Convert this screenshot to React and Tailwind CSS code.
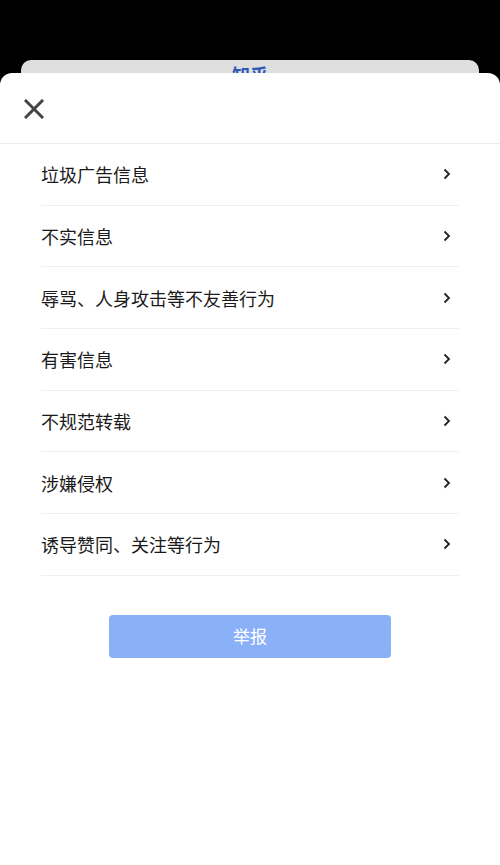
const reasons = [
  '垃圾广告信息',
  '不实信息',
  '辱骂、人身攻击等不友善行为',
  '有害信息',
  '不规范转载',
  '涉嫌侵权',
  '诱导赞同、关注等行为',
]

const CloseIcon = () => (
  <svg width="20" height="20" viewBox="0 0 20 20" fill="none">
    <path d="M2 2L18 18M18 2L2 18" stroke="#444" strokeWidth="3" strokeLinecap="square" />
  </svg>
)

const Chevron = () => (
  <svg width="8" height="12" viewBox="0 0 8 12" fill="none">
    <path d="M1.5 1.5L6 6L1.5 10.5" stroke="#222" strokeWidth="1.8" />
  </svg>
)

export default function App() {
  return (
    <div
      className="min-h-[865px] bg-black pt-[60px] flex flex-col"
      style={{ fontFamily: '"PingFang SC", "Noto Sans CJK SC", "Noto Sans", sans-serif' }}
    >
      {/* card behind the sheet */}
      <div className="mx-[21px] h-[13px] overflow-hidden rounded-t-[10px] bg-[#dedede] flex justify-center">
        <span className="pt-[5px] text-[18px] leading-[18px] font-bold text-[#2f57b5]">知乎</span>
      </div>

      {/* sheet */}
      <div className="flex-1 bg-white rounded-t-[12px]">
        <div className="h-[71px] flex items-center pl-[24px] border-b border-[#ebebeb] pt-[1px]">
          <CloseIcon />
        </div>

        <ul className="px-[41px]">
          {reasons.map(r => (
            <li
              key={r}
              className="h-[61.67px] flex items-center justify-between border-b border-[#f0f0f0] pr-[8px]"
            >
              <span className="text-[18px] text-[#1a1a1a] pt-[1px]">{r}</span>
              <Chevron />
            </li>
          ))}
        </ul>

        <div className="flex justify-center pt-[39px]">
          <button className="w-[282px] h-[43px] rounded-[4px] bg-[#8ab1f8] text-white text-[17px]">
            举报
          </button>
        </div>
      </div>
    </div>
  )
}
